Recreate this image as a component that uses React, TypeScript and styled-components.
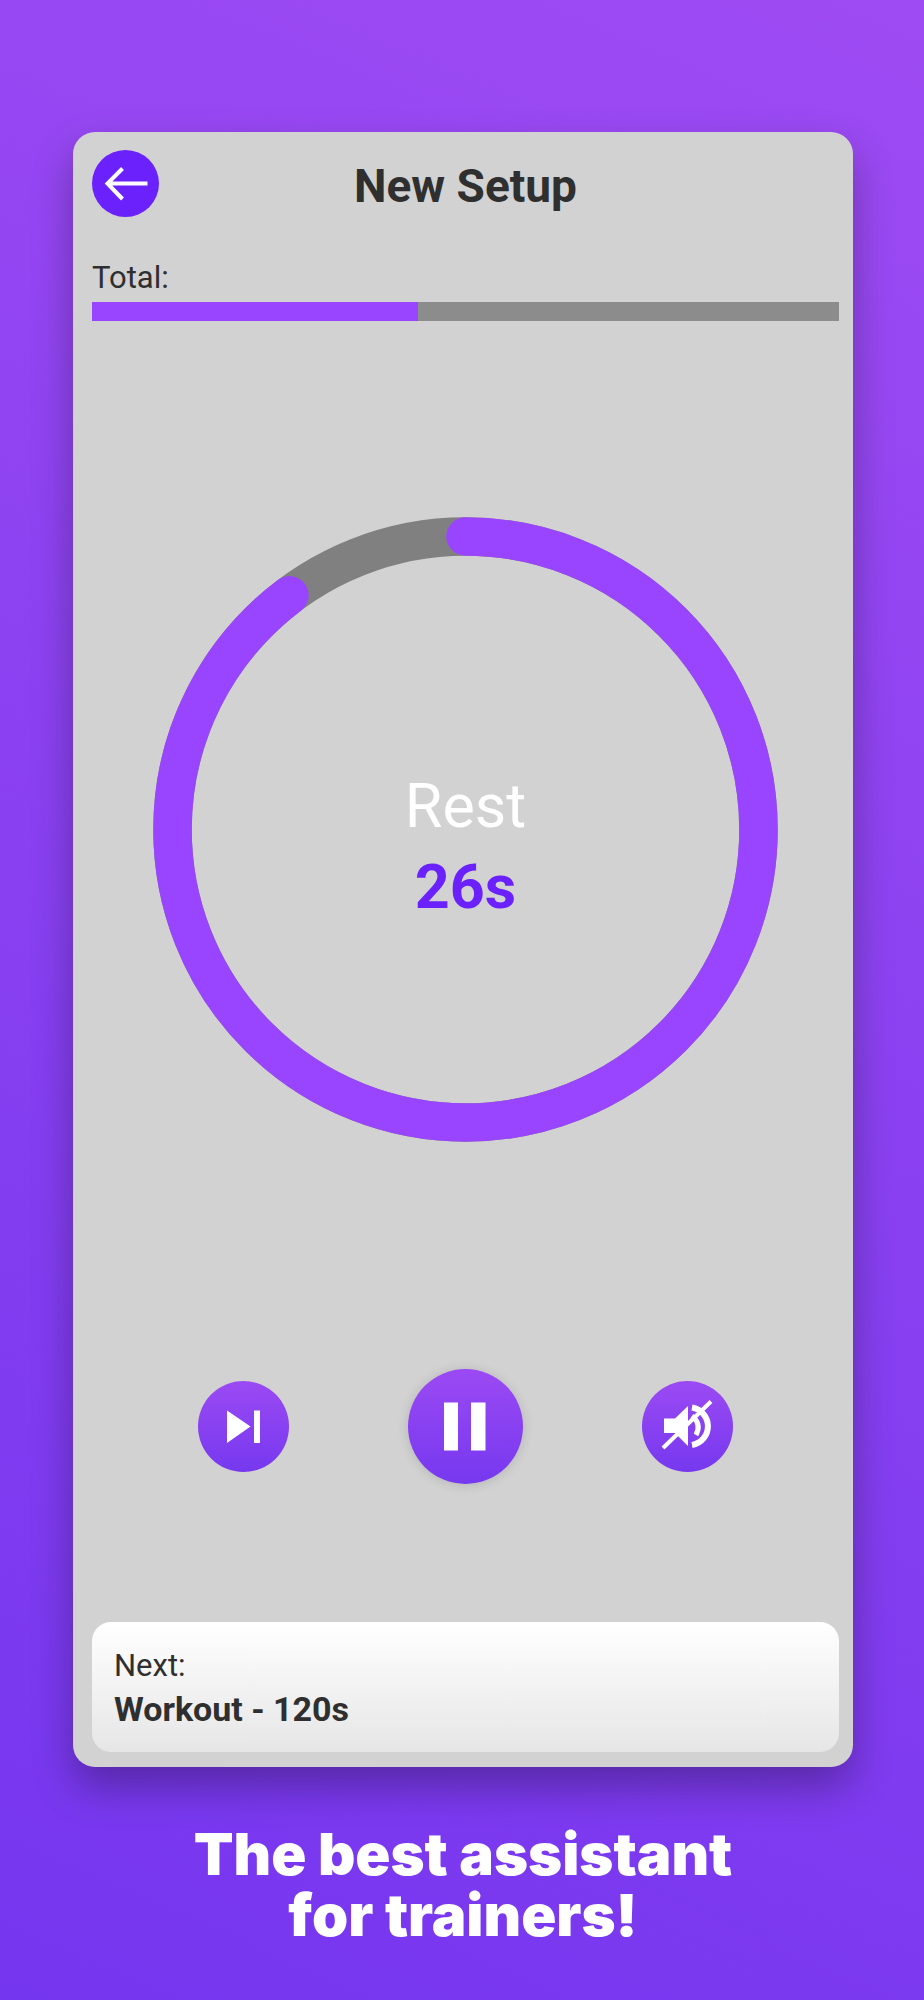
import React from "react";
import styled, { createGlobalStyle } from "styled-components";

const accent = "#9945ff";
const deep = "#6b21fb";
const ink = "#2f2f2f";
const buttonFill = "linear-gradient(180deg, #9b4af3 0%, #7638ef 100%)";

const Global = createGlobalStyle`
  *, *::before, *::after { box-sizing: border-box; }
  body { margin: 0; }
`;

const Page = styled.main`
  min-height: 100vh;
  padding: 132px 71px 40px 73px;
  background: linear-gradient(203deg, #9e4bf3 0%, #7536ef 100%);
  font-family: Roboto, "Liberation Sans", sans-serif;
  color: ${ink};
`;

const Screen = styled.section`
  display: flex;
  flex-direction: column;
  padding: 18px 14px 15px 19px;
  border-radius: 22px;
  background: #d2d2d2;
  box-shadow: 0 20px 40px rgba(0, 0, 0, 0.3);
`;

const Header = styled.header`
  display: grid;
  grid-template-columns: 67px 1fr 67px;
  align-items: center;
`;

const BackButton = styled.button`
  display: grid;
  place-items: center;
  width: 67px;
  height: 67px;
  padding: 0;
  border: 0;
  border-radius: 50%;
  background: ${deep};
`;

const Title = styled.h1`
  margin: 0;
  padding-top: 4px;
  font-size: 46px;
  line-height: 54px;
  font-weight: 700;
  text-align: center;
`;

const Total = styled.div`
  margin-top: 43px;
`;

const Label = styled.div`
  font-size: 31px;
  line-height: 36px;
`;

const Track = styled.div`
  height: 19px;
  margin-top: 6px;
  background: #8c8c8c;
`;

const Fill = styled.div`
  height: 100%;
  background: ${accent};
`;

const Dial = styled.div`
  display: grid;
  place-items: center;
  margin-top: 196px;

  > * {
    grid-area: 1 / 1;
  }
`;

const Ring = styled.svg`
  display: block;
  width: 100%;
  max-width: 625px;
`;

const Reading = styled.div`
  padding-top: 34px;
  text-align: center;
  font-size: 61px;
  line-height: 81px;
`;

const Phase = styled.div`
  color: #fff;
`;

const Seconds = styled.div`
  color: ${deep};
  font-weight: 700;
`;

const Controls = styled.div`
  display: flex;
  justify-content: center;
  align-items: center;
  gap: 119px;
  margin-top: 227px;
`;

const RoundButton = styled.button<{ $size: number; $raised?: boolean }>`
  display: grid;
  place-items: center;
  flex: none;
  width: ${(p) => p.$size}px;
  height: ${(p) => p.$size}px;
  padding: 0;
  border: 0;
  border-radius: 50%;
  background: ${buttonFill};
  box-shadow: ${(p) => (p.$raised ? "0 1px 12px rgba(0, 0, 0, 0.14)" : "none")};
`;

const Next = styled.section`
  margin-top: 138px;
  padding: 26px 22px 23px;
  border-radius: 19px;
  background: linear-gradient(180deg, #ffffff 0%, #e6e6e6 100%);
`;

const NextName = styled.div`
  margin-top: 5px;
  font-size: 34px;
  line-height: 40px;
  font-weight: 700;
`;

const Tagline = styled.p`
  margin: 57px 0 0;
  color: #fff;
  font-family: Inter, "Open Sans", sans-serif;
  font-size: 58px;
  line-height: 61px;
  font-weight: 900;
  text-align: center;
`;

const RADIUS = 293;
const LENGTH = 2 * Math.PI * RADIUS;

function ProgressRing({ value }: { value: number }) {
  return (
    <Ring viewBox="0 0 625 625" fill="none" strokeWidth="38.5" aria-hidden="true">
      <circle cx="312.5" cy="312.5" r={RADIUS} stroke="#808080" />
      <circle
        cx="312.5"
        cy="312.5"
        r={RADIUS}
        stroke={accent}
        strokeLinecap="round"
        strokeDasharray={`${LENGTH * value} ${LENGTH}`}
        transform="rotate(-90 312.5 312.5)"
      />
    </Ring>
  );
}

const ArrowIcon = () => (
  <svg width="67" height="67" viewBox="0 0 67 67" fill="none" stroke="#fff" strokeWidth="4" aria-hidden="true">
    <path d="M55.500 33.500H16M30.500 18.500L15.500 33.500L30.500 49" />
  </svg>
);

const SkipIcon = () => (
  <svg width="91" height="91" viewBox="0 0 91 91" fill="#fff" aria-hidden="true">
    <path d="M29 29.500L52.500 45.500L29 62ZM56 29.500H62V62H56Z" />
  </svg>
);

const PauseIcon = () => (
  <svg width="115" height="115" viewBox="0 0 115 115" fill="#fff" aria-hidden="true">
    <path d="M36 33.500H50V81.500H36ZM63 33.500H77.500V81.500H63Z" />
  </svg>
);

const MuteIcon = () => (
  <svg width="91" height="91" viewBox="0 0 91 91" fill="none" aria-hidden="true">
    <path d="M22 37.500H33L46 25V65L33 52H22Z" fill="#fff" />
    <path d="M50 26.500A19 19 0 0 1 50 64" stroke="#fff" strokeWidth="6" />
    <path d="M50 35Q60 43 54 54" stroke="#fff" strokeWidth="5" />
    <path d="M21 67L69 20.500" stroke="#fff" strokeWidth="4" />
  </svg>
);

export default function App() {
  return (
    <>
      <Global />
      <Page>
        <Screen>
          <Header>
            <BackButton type="button" aria-label="Back">
              <ArrowIcon />
            </BackButton>
            <Title>New Setup</Title>
          </Header>
          <Total>
            <Label id="total-label">Total:</Label>
            <Track role="progressbar" aria-labelledby="total-label" aria-valuenow={44}>
              <Fill style={{ width: "43.7%" }} />
            </Track>
          </Total>
          <Dial>
            <ProgressRing value={0.897} />
            <Reading>
              <Phase>Rest</Phase>
              <Seconds>26s</Seconds>
            </Reading>
          </Dial>
          <Controls>
            <RoundButton type="button" $size={91} aria-label="Skip">
              <SkipIcon />
            </RoundButton>
            <RoundButton type="button" $size={115} $raised aria-label="Pause">
              <PauseIcon />
            </RoundButton>
            <RoundButton type="button" $size={91} aria-label="Mute">
              <MuteIcon />
            </RoundButton>
          </Controls>
          <Next>
            <Label>Next:</Label>
            <NextName>Workout - 120s</NextName>
          </Next>
        </Screen>
        <Tagline>
          The best assistant
          <br />
          for trainers!
        </Tagline>
      </Page>
    </>
  );
}
